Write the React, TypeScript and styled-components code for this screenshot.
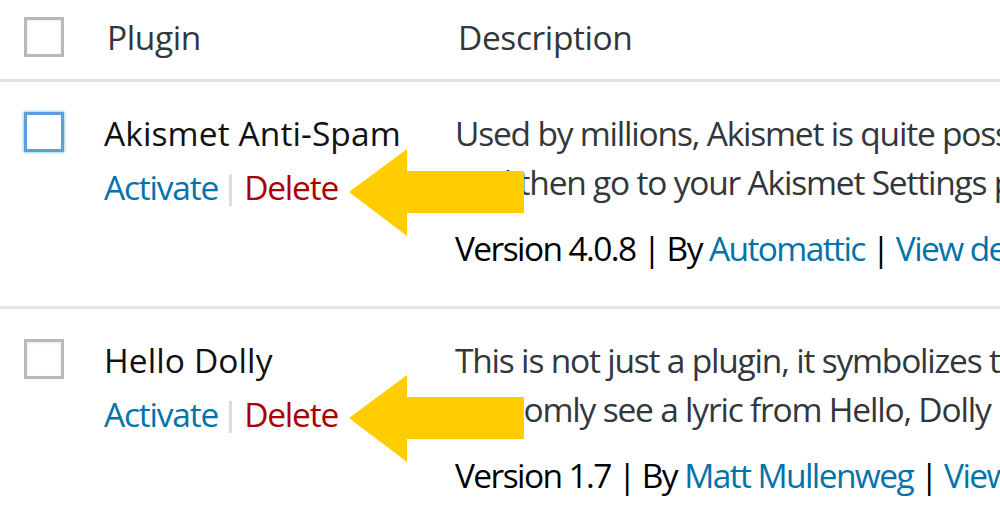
import React from 'react';
import styled, { createGlobalStyle } from 'styled-components';

const GlobalStyle = createGlobalStyle`
  html, body {
    margin: 0;
    padding: 0;
    background: #fff;
  }
  body {
    width: 1000px;
    height: 512px;
    overflow: hidden;
    font-family: "Open Sans", "Noto Sans", "Liberation Sans", sans-serif;
    font-size: 33.5px;
    letter-spacing: -1.2px;
    line-height: 49px;
    color: #32373c;
  }
`;

interface Plugin {
    id: number;
    name: string;
    lines: string[];
    version: string;
    author: string;
    focused: boolean;
}

const plugins: Plugin[] = [
    {
        id: 1,
        name: 'Akismet Anti-Spam',
        lines: [
            'Used by millions, Akismet is quite possibly the best way in the world to protect your blog from spam.',
            'and then go to your Akismet Settings page to set up your API key.',
        ],
        version: '4.0.8',
        author: 'Automattic',
        focused: true,
    },
    {
        id: 2,
        name: 'Hello Dolly',
        lines: [
            'This is not just a plugin, it symbolizes the hope and enthusiasm of an entire generation.',
            'randomly see a lyric from Hello, Dolly in the upper right of your admin screen on every page.',
        ],
        version: '1.7',
        author: 'Matt Mullenweg',
        focused: false,
    },
];

const Table = styled.div`
  width: 1000px;
  overflow: hidden;
`;

const HeaderRow = styled.div`
  display: grid;
  grid-template-columns: 104px 351px 1fr;
  padding-top: 13px;
  height: 66px;
  border-bottom: 3px solid #e1e1e1;
`;

const HeadCell = styled.div`
  padding-left: 3px;
  white-space: nowrap;
  letter-spacing: -0.4px;
  color: #32373c;
`;

const Row = styled.div<{ last?: boolean }>`
  position: relative;
  display: grid;
  grid-template-columns: 104px 351px 1fr;
  padding: 27px 0 33px;
  border-bottom: ${({ last }) => (last ? 'none' : '3px solid #e5e5e5')};
`;

const CheckCell = styled.div<{ offset: number }>`
  padding-left: 24px;
  padding-top: ${({ offset }) => offset}px;
`;

const Checkbox = styled.div<{ focused?: boolean }>`
  width: 34px;
  height: 34px;
  border: 3px solid ${({ focused }) => (focused ? '#5b9dd9' : '#b4b9be')};
  background: #fff;
  box-shadow: ${({ focused }) =>
        focused ? '0 0 3px rgba(30, 140, 190, 0.7)' : 'inset 0 1px 3px rgba(0, 0, 0, 0.08)'};
`;

const NameCell = styled.div`
  white-space: nowrap;
`;

const Title = styled.div`
  color: #111;
  letter-spacing: 0.1px;
`;

const Actions = styled.div`
  margin-top: 5px;
  display: flex;
  align-items: center;
`;

const Link = styled.span<{ danger?: boolean }>`
  color: ${({ danger }) => (danger ? '#a00' : '#0073aa')};
`;

const Sep = styled.span`
  display: inline-block;
  width: 3px;
  height: 32px;
  margin: 4px 12px 0 11px;
  background: #ddd;
`;

const DescCell = styled.div`
  white-space: nowrap;
  overflow: hidden;
`;

const Line = styled.div`
  color: #32373c;
`;

const Meta = styled.div`
  margin-top: 17px;
  letter-spacing: -1.6px;
  color: #000;
`;

const Arrow = styled.svg<{ top: number }>`
  position: absolute;
  left: 349px;
  top: ${({ top }) => top}px;
`;

const YellowArrow: React.FC<{ top: number }> = ({ top }) => (
    <Arrow top={top} width="175" height="87" viewBox="0 0 175 87">
        <polygon points="0,43 58,0 58,22 175,22 175,64 58,64 58,87" fill="#ffcc00" />
    </Arrow>
);

const App: React.FC = () => {
    return (
        <>
            <GlobalStyle />
            <Table>
                <HeaderRow>
                    <CheckCell offset={4}>
                        <Checkbox />
                    </CheckCell>
                    <HeadCell>Plugin</HeadCell>
                    <HeadCell>Description</HeadCell>
                </HeaderRow>
                {plugins.map((p, i) => (
                    <Row key={p.id} last={i === plugins.length - 1}>
                        <CheckCell offset={3}>
                            <Checkbox focused={p.focused} />
                        </CheckCell>
                        <NameCell>
                            <Title>{p.name}</Title>
                            <Actions>
                                <Link>Activate</Link>
                                <Sep />
                                <Link danger>Delete</Link>
                            </Actions>
                        </NameCell>
                        <DescCell>
                            {p.lines.map((l) => (
                                <Line key={l}>{l}</Line>
                            ))}
                            <Meta>
                                Version {p.version} | By <Link>{p.author}</Link> | <Link>View details</Link>
                            </Meta>
                        </DescCell>
                        <YellowArrow top={i === 0 ? 67 : 66} />
                    </Row>
                ))}
            </Table>
        </>
    );
};

export default App;
